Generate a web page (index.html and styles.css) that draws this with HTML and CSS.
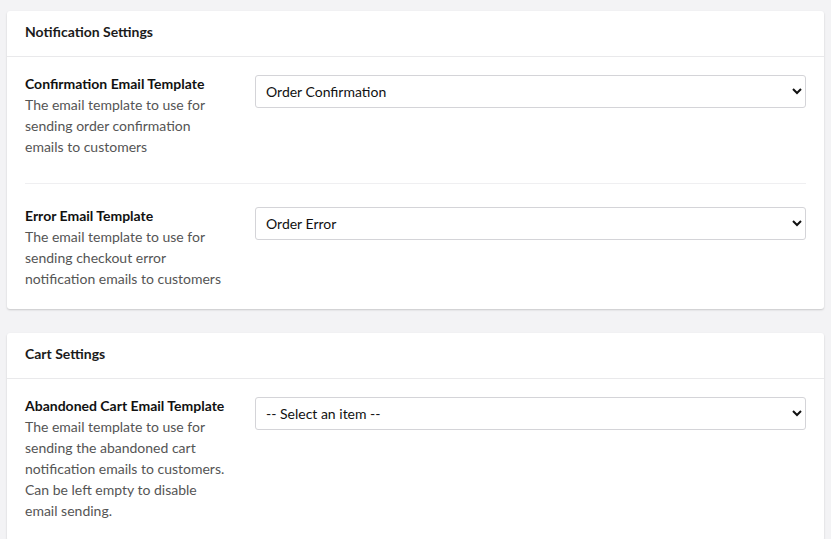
FILE: index.html
```html
<!DOCTYPE html>
<html>
<head>
    <link rel="stylesheet" href="styles.css">
</head>
<body>
    <div class="panel">
        <div class="panel-header">Notification Settings</div>
        <div class="panel-body">
            <div class="field">
                <div class="field-info">
                    <div class="field-label">Confirmation Email Template</div>
                    <div class="field-desc">The email template to use for sending order confirmation emails to customers</div>
                </div>
                <div class="field-input">
                    <select>
                        <option>Order Confirmation</option>
                    </select>
                </div>
            </div>
            <div class="field">
                <div class="field-info">
                    <div class="field-label">Error Email Template</div>
                    <div class="field-desc">The email template to use for sending checkout error notification emails to customers</div>
                </div>
                <div class="field-input">
                    <select>
                        <option>Order Error</option>
                    </select>
                </div>
            </div>
        </div>
    </div>

    <div class="panel">
        <div class="panel-header">Cart Settings</div>
        <div class="panel-body">
            <div class="field">
                <div class="field-info">
                    <div class="field-label">Abandoned Cart Email Template</div>
                    <div class="field-desc">The email template to use for sending the abandoned cart notification emails to customers. Can be left empty to disable email sending.</div>
                </div>
                <div class="field-input">
                    <select>
                        <option>-- Select an item --</option>
                    </select>
                </div>
            </div>
        </div>
    </div>
</body>
</html>
```

FILE: styles.css
```css
* {
    margin: 0;
    padding: 0;
    box-sizing: border-box;
    font-family: Lato, "Open Sans", sans-serif;
}

body {
    background: #f3f3f5;
    padding: 11px 7px;
}

.panel {
    background: #fff;
    border-radius: 3px;
    box-shadow: 0 1px 2px rgba(0,0,0,0.18);
    margin-bottom: 24px;
}

.panel-header {
    height: 46px;
    padding: 0 18px 4px;
    display: flex;
    align-items: center;
    font-size: 14px;
    font-weight: bold;
    color: #1b1b1b;
    border-bottom: 1px solid #e9e9eb;
}

.panel-body {
    padding: 16px 18px 20px;
}

.field {
    display: grid;
    grid-template-columns: 205px 1fr;
    gap: 25px;
    padding-bottom: 26px;
    margin-bottom: 21px;
    border-bottom: 1px solid #efeff1;
}

.field:last-child {
    padding-bottom: 0;
    margin-bottom: 0;
    border-bottom: none;
}

.field-label {
    font-size: 14px;
    font-weight: bold;
    line-height: 21px;
    color: #111;
}

.field-desc {
    font-size: 14px;
    line-height: 21px;
    color: #555;
}

.field-input {
    padding-top: 2px;
}

select {
    width: 100%;
    height: 33px;
    padding: 0 6px;
    font-size: 14px;
    color: #111;
    background: #fff;
    border: 1px solid #d4d4d8;
    border-radius: 3px;
}
```
